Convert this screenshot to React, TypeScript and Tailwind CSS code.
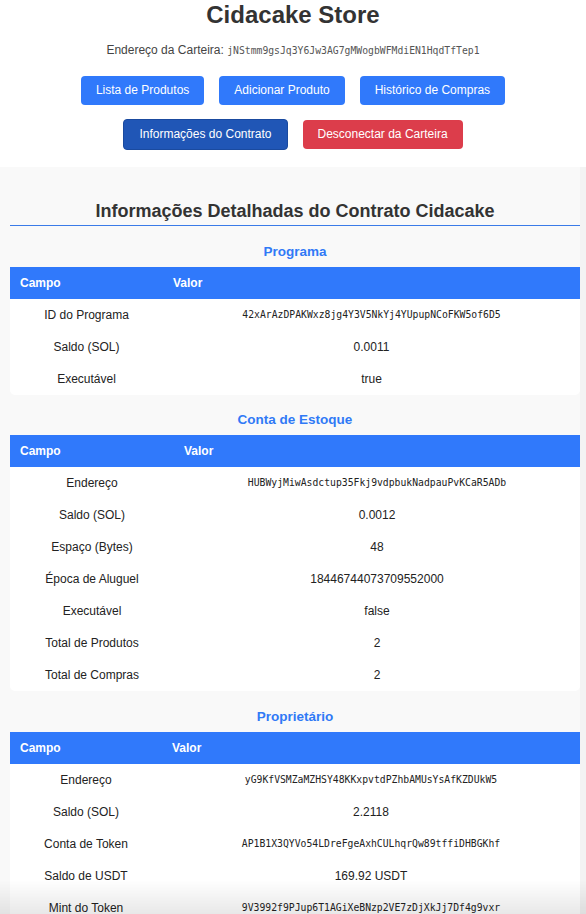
import React from "react";

type Row = { k: string; v: string; mono?: boolean };

const sections: { title: string; col: string; mt: string; rows: Row[] }[] = [
  {
    title: "Programa",
    col: "w-[153px]",
    mt: "mt-[17px]",
    rows: [
      { k: "ID do Programa", v: "42xArAzDPAKWxz8jg4Y3V5NkYj4YUpupNCoFKW5of6D5", mono: true },
      { k: "Saldo (SOL)", v: "0.0011" },
      { k: "Executável", v: "true" },
    ],
  },
  {
    title: "Conta de Estoque",
    col: "w-[164px]",
    mt: "mt-[16px]",
    rows: [
      { k: "Endereço", v: "HUBWyjMiwAsdctup35Fkj9vdpbukNadpauPvKCaR5ADb", mono: true },
      { k: "Saldo (SOL)", v: "0.0012" },
      { k: "Espaço (Bytes)", v: "48" },
      { k: "Época de Aluguel", v: "18446744073709552000" },
      { k: "Executável", v: "false" },
      { k: "Total de Produtos", v: "2" },
      { k: "Total de Compras", v: "2" },
    ],
  },
  {
    title: "Proprietário",
    col: "w-[152px]",
    mt: "mt-[17px]",
    rows: [
      { k: "Endereço", v: "yG9KfVSMZaMZHSY48KKxpvtdPZhbAMUsYsAfKZDUkW5", mono: true },
      { k: "Saldo (SOL)", v: "2.2118" },
      { k: "Conta de Token", v: "AP1B1X3QYVo54LDreFgeAxhCULhqrQw89tffiDHBGKhf", mono: true },
      { k: "Saldo de USDT", v: "169.92 USDT" },
      { k: "Mint do Token", v: "9V3992f9PJup6T1AGiXeBNzp2VE7zDjXkJj7Df4g9vxr", mono: true },
    ],
  },
];

const mono = "font-['DejaVu_Sans_Mono',monospace]";

export default function App() {
  return (
    <div className="min-h-[914px] bg-[#f3f3f3] font-['Liberation_Sans',Arial,sans-serif]">
      <header className="bg-white pt-[1px] pb-[17px] flex flex-col items-center">
        <h1 className="text-[24px] leading-[28px] font-bold text-[#333]">Cidacake Store</h1>
        <p className="mt-[14px] text-[12px] leading-[14px] text-[#444]">
          Endereço da Carteira:{" "}
          <span className={`${mono} text-[9.75px] text-[#555]`}>jNStmm9gsJq3Y6Jw3AG7gMWogbWFMdiEN1HqdTfTep1</span>
        </p>
        <div className="mt-[18px] flex flex-wrap justify-center items-center gap-x-[15px] gap-y-[14px] px-[40px]">
          <button className="bg-[#3079fb] text-white text-[12px] leading-[15px] px-[15px] py-[7px] rounded-[4px]">
            Lista de Produtos
          </button>
          <button className="bg-[#3079fb] text-white text-[12px] leading-[15px] px-[15px] py-[7px] rounded-[4px]">
            Adicionar Produto
          </button>
          <button className="bg-[#3079fb] text-white text-[12px] leading-[15px] px-[15px] py-[7px] rounded-[4px]">
            Histórico de Compras
          </button>
          <button className="bg-[#2056b6] border border-[#1a4a9f] text-white text-[12px] leading-[15px] px-[15px] py-[7px] rounded-[4px]">
            Informações do Contrato
          </button>
          <button className="bg-[#dc3d4b] text-white text-[12px] leading-[15px] px-[15px] py-[7px] rounded-[4px]">
            Desconectar da Carteira
          </button>
        </div>
      </header>

      <main className="w-[580px] bg-[#f9f9f9] pl-[10px] pt-[33px] pb-[20px]">
        <h2 className="text-[18px] leading-[22px] font-bold text-[#333] text-center pb-[3px] border-b border-[#3a7be8]">
          Informações Detalhadas do Contrato Cidacake
        </h2>
        {sections.map((s) => (
          <section key={s.title}>
            <h3 className={`${s.mt} mb-[7px] text-[13.5px] leading-[17px] font-bold text-[#3079f6] text-center`}>
              {s.title}
            </h3>
            <div className="bg-white rounded-b-[5px] overflow-hidden">
              <table className="w-full table-fixed border-collapse text-[12px]">
                <colgroup>
                  <col className={s.col} />
                  <col />
                </colgroup>
                <thead>
                  <tr className="bg-[#3079fb] text-white h-[32px]">
                    <th className="text-left font-bold px-[10px]">Campo</th>
                    <th className="text-left font-bold px-[10px]">Valor</th>
                  </tr>
                </thead>
                <tbody>
                  {s.rows.map((r) => (
                    <tr key={r.k} className="h-[32px] text-[#222]">
                      <td className="text-center px-[10px]">{r.k}</td>
                      <td className={`text-center px-[10px] ${r.mono ? `${mono} text-[9.75px]` : ""}`}>{r.v}</td>
                    </tr>
                  ))}
                </tbody>
              </table>
            </div>
          </section>
        ))}
      </main>
      <div className="pointer-events-none fixed left-0 right-0 bottom-0 h-[34px] bg-gradient-to-b from-[rgba(0,0,0,0)] to-[rgba(0,0,0,0.09)]" />
    </div>
  );
}
